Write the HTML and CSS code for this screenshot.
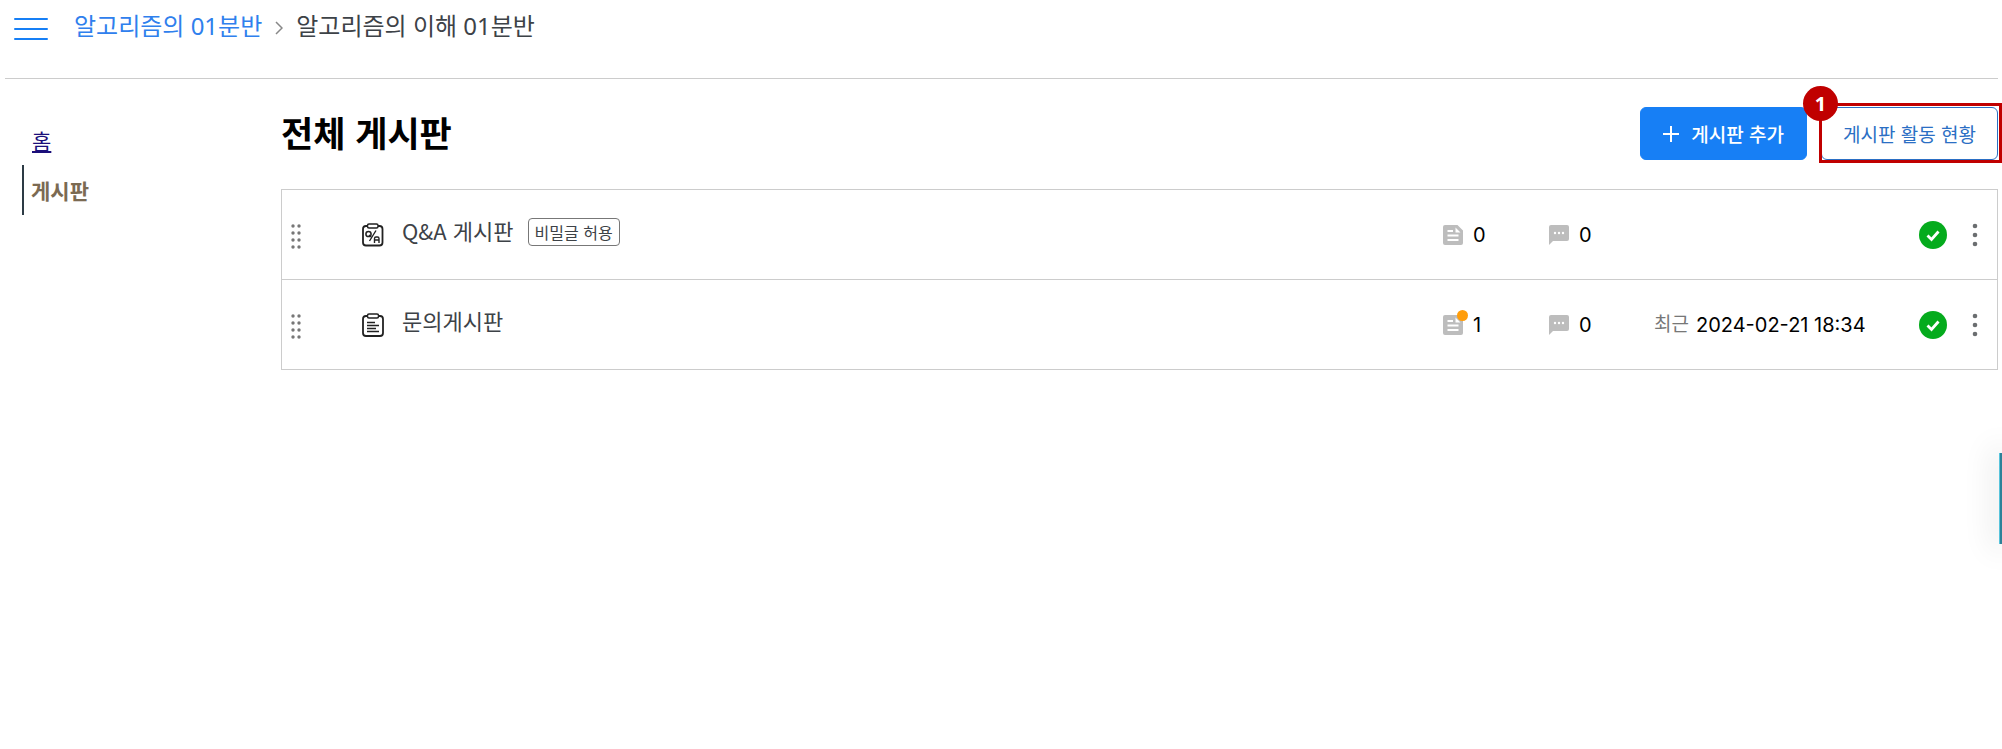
FILE: index.html
```html
<!DOCTYPE html>
<html lang="ko">

<head>
    <meta charset="UTF-8">
    <meta name="viewport" content="width=device-width, initial-scale=1.0">
    <title>전체 게시판</title>
    <link rel="stylesheet" href="styles.css">
</head>

<body>
    <!-- shared icons -->
    <svg class="icon-defs" width="0" height="0" aria-hidden="true">
        <symbol id="icon-drag" viewBox="0 0 10 26">
            <g fill="#777">
                <circle cx="2" cy="2" r="1.7" /><circle cx="8" cy="2" r="1.7" />
                <circle cx="2" cy="9" r="1.7" /><circle cx="8" cy="9" r="1.7" />
                <circle cx="2" cy="16" r="1.7" /><circle cx="8" cy="16" r="1.7" />
                <circle cx="2" cy="23" r="1.7" /><circle cx="8" cy="23" r="1.7" />
            </g>
        </symbol>
        <symbol id="icon-post" viewBox="0 0 20 20">
            <path fill="#bdbdbd" fill-rule="evenodd" d="M2 0h12.500L20 5.500V18a2 2 0 0 1-2 2H2a2 2 0 0 1-2-2V2a2 2 0 0 1 2-2zM4.500 5v2H10V5zM12.500 2.500v5h5zM4.500 9.500v2h11v-2zM4.500 14v2h11v-2z" />
        </symbol>
        <symbol id="icon-comment" viewBox="0 0 20 20">
            <path fill="#bdbdbd" d="M2 0h16a2 2 0 0 1 2 2v12a2 2 0 0 1-2 2H4l-4 4V2a2 2 0 0 1 2-2z" />
            <g fill="#fff">
                <circle cx="6" cy="8" r="1.200" /><circle cx="10" cy="8" r="1.200" /><circle cx="14" cy="8" r="1.200" />
            </g>
        </symbol>
        <symbol id="icon-check" viewBox="0 0 28 28">
            <circle cx="14" cy="14" r="14" fill="#05ab1d" />
            <path d="M8.500 14.500l4 4 7-8" fill="none" stroke="#fff" stroke-width="2.800" />
        </symbol>
        <symbol id="icon-more" viewBox="0 0 6 24">
            <g fill="#6b6e70">
                <circle cx="3" cy="3" r="2.300" /><circle cx="3" cy="12" r="2.300" /><circle cx="3" cy="21" r="2.300" />
            </g>
        </symbol>
    </svg>

    <header class="header">
        <button class="menu-btn" type="button" aria-label="메뉴">
            <span></span><span></span><span></span>
        </button>
        <nav class="breadcrumb">
            <a class="breadcrumb-link" href="#">알고리즘의 01분반</a>
            <svg class="breadcrumb-arrow" width="8" height="14" viewBox="0 0 8 14" aria-hidden="true">
                <path d="M1 1l6 6-6 6" fill="none" stroke="#888" stroke-width="1.500" />
            </svg>
            <span>알고리즘의 이해 01분반</span>
        </nav>
    </header>

    <div class="layout">
        <nav class="sidebar">
            <a class="side-link" href="#">홈</a>
            <a class="side-link side-active" href="#">게시판</a>
        </nav>

        <main class="main">
            <div class="title-row">
                <h1 class="title">전체 게시판</h1>
                <div class="actions">
                    <button class="btn btn-primary" type="button">
                        <svg width="16" height="16" viewBox="0 0 16 16" aria-hidden="true">
                            <path d="M8 0v16M0 8h16" stroke="#fff" stroke-width="2" />
                        </svg>
                        게시판 추가
                    </button>
                    <div class="marked">
                        <button class="btn btn-outline" type="button">게시판 활동 현황</button>
                        <div class="mark-frame"></div>
                        <span class="mark-number">1</span>
                    </div>
                </div>
            </div>

            <ul class="board-list">
                <li class="board">
                    <svg class="drag" width="10" height="26"><use href="#icon-drag" /></svg>
                    <svg class="board-icon" width="22" height="24" viewBox="0 0 22 24" fill="none" stroke="#222">
                        <path d="M5.500 3H4a3 3 0 0 0-3 3v13.500a3 3 0 0 0 3 3h13.500a3 3 0 0 0 3-3V6a3 3 0 0 0-3-3H16" stroke-width="1.800" />
                        <rect x="5.500" y="1" width="10.500" height="4" rx="1.500" stroke-width="1.500" />
                        <circle cx="6.500" cy="11" r="2.600" stroke-width="1.500" />
                        <path d="M7 12l2 2M14 7.500L7.500 18M12.500 20v-4.500a1.500 1.500 0 0 1 1.500-1.500h1.500a1.500 1.500 0 0 1 1.500 1.500V20M12.500 17H17" stroke-width="1.400" />
                    </svg>
                    <div class="board-name">
                        <a class="board-link" href="#">Q&amp;A 게시판</a>
                        <span class="tag">비밀글 허용</span>
                    </div>
                    <div class="count">
                        <svg width="20" height="20"><use href="#icon-post" /></svg>
                        <span>0</span>
                    </div>
                    <div class="count">
                        <svg width="20" height="20"><use href="#icon-comment" /></svg>
                        <span>0</span>
                    </div>
                    <div class="recent"></div>
                    <svg class="status" width="28" height="28"><use href="#icon-check" /></svg>
                    <button class="more-btn" type="button" aria-label="더보기">
                        <svg width="6" height="24"><use href="#icon-more" /></svg>
                    </button>
                </li>
                <li class="board">
                    <svg class="drag" width="10" height="26"><use href="#icon-drag" /></svg>
                    <svg class="board-icon" width="22" height="24" viewBox="0 0 22 24" fill="none" stroke="#222">
                        <path d="M5.500 3H4a3 3 0 0 0-3 3v14a3 3 0 0 0 3 3h14a3 3 0 0 0 3-3V6a3 3 0 0 0-3-3h-1.500" stroke-width="1.800" />
                        <rect x="5.500" y="1" width="11" height="4" rx="1.500" stroke-width="1.500" />
                        <path d="M5 9.500h8M5 12.500h12M5 15.500h9M5 18.500h12" stroke-width="1.500" />
                    </svg>
                    <div class="board-name">
                        <a class="board-link" href="#">문의게시판</a>
                    </div>
                    <div class="count count-new">
                        <svg width="20" height="20"><use href="#icon-post" /></svg>
                        <span>1</span>
                    </div>
                    <div class="count">
                        <svg width="20" height="20"><use href="#icon-comment" /></svg>
                        <span>0</span>
                    </div>
                    <div class="recent">
                        <span class="recent-label">최근</span>
                        <time datetime="2024-02-21T18:34">2024-02-21 18:34</time>
                    </div>
                    <svg class="status" width="28" height="28"><use href="#icon-check" /></svg>
                    <button class="more-btn" type="button" aria-label="더보기">
                        <svg width="6" height="24"><use href="#icon-more" /></svg>
                    </button>
                </li>
            </ul>
        </main>
    </div>

    <div class="side-tab"></div>
</body>

</html>
```
FILE: styles.css
```css
* {
    box-sizing: border-box;
}

:root {
    --color-blue: #177ff5;
    --color-mark: #c00000;
    --color-line: #ccc;
    --color-text: #3d4247;
}

body {
    margin: 0;
    padding: 0 4px 0 5px;
    background-color: #fff;
    color: var(--color-text);
    font-family: "Noto Sans CJK KR", "Noto Sans", sans-serif;
    overflow-x: hidden;
}

button {
    font-family: inherit;
    cursor: pointer;
}

svg {
    display: block;
    flex: none;
}

.icon-defs {
    position: absolute;
}

.header {
    display: flex;
    align-items: flex-start;
    gap: 26px;
    height: 79px;
    padding: 8px 9px 0;
    border-bottom: 1px solid var(--color-line);
}

.menu-btn {
    display: flex;
    flex-direction: column;
    gap: 8px;
    width: 34px;
    padding: 10px 0;
    border: 0;
    background: none;
}

.menu-btn span {
    width: 100%;
    height: 2px;
    border-radius: 1px;
    background-color: var(--color-blue);
}

.breadcrumb {
    display: flex;
    align-items: center;
    gap: 13px;
    font-family: "Noto Sans", "Noto Sans CJK KR", sans-serif;
    font-size: 24px;
    line-height: 36px;
}

.breadcrumb-link {
    color: #2f80ed;
    text-decoration: none;
}

.breadcrumb-arrow {
    margin-top: 4px;
}

.layout {
    display: grid;
    grid-template-columns: 276px 1fr;
}

.sidebar {
    padding: 36px 17px;
    font-size: 21px;
    line-height: 50px;
}

.side-link {
    display: block;
    padding-left: 10px;
    color: #1b0f7a;
}

.side-active {
    padding-left: 7px;
    border-left: 2px solid #2d3b45;
    color: #7b6a52;
    font-weight: bold;
    text-decoration: none;
}

.title-row {
    display: flex;
    justify-content: space-between;
    align-items: flex-start;
    padding: 28px 0 29px;
}

.title {
    margin: 0;
    color: #000;
    font-size: 35px;
    line-height: 50px;
}

.actions {
    display: flex;
    gap: 14px;
}

.btn {
    display: flex;
    align-items: center;
    gap: 12px;
    height: 53px;
    padding: 0 22px;
    border: 1px solid var(--color-blue);
    border-radius: 6px;
    font-size: 19px;
    line-height: 28px;
}

.btn-primary {
    background-color: var(--color-blue);
    color: #fff;
    font-weight: 500;
}

.btn-outline {
    padding: 0 21px;
    background-color: #fff;
    border-color: #2b6fc4;
    color: #2b6fc4;
}

.marked {
    position: relative;
}

.mark-frame {
    position: absolute;
    inset: -4px -4px -3px -2px;
    border: 3px solid var(--color-mark);
    pointer-events: none;
}

.mark-number {
    position: absolute;
    top: -21px;
    left: -18px;
    width: 35px;
    height: 35px;
    border-radius: 50%;
    background-color: var(--color-mark);
    color: #fff;
    font-family: "Noto Sans", sans-serif;
    font-size: 20px;
    font-weight: bold;
    line-height: 35px;
    text-align: center;
}

.board-list {
    margin: 0;
    padding: 0;
    border: 1px solid var(--color-line);
    list-style: none;
}

.board {
    box-sizing: content-box;
    display: grid;
    grid-template-columns: 80px 40px 1fr 106px 105px 265px 42px 36px;
    align-items: center;
    height: 89px;
}

.board + .board {
    border-top: 1px solid var(--color-line);
}

.drag {
    margin: 4px 0 0 9px;
}

.board-name {
    display: flex;
    align-items: center;
    gap: 14px;
    padding-bottom: 10px;
}

.board-link {
    color: inherit;
    font-size: 22px;
    line-height: 32px;
    text-decoration: none;
}

.tag {
    margin-top: 4px;
    padding: 0 6px;
    border: 1px solid #777;
    border-radius: 4px;
    font-size: 16px;
    line-height: 26px;
}

.count,
.recent {
    display: flex;
    align-items: center;
    color: #000;
    font-family: Inter, "Noto Sans CJK KR", sans-serif;
    font-size: 20px;
    line-height: 28px;
}

.count {
    position: relative;
    gap: 10px;
}

/* unread dot over the post icon */
.count-new::after {
    content: "";
    position: absolute;
    top: -1px;
    left: 14px;
    width: 11px;
    height: 11px;
    border-radius: 50%;
    background-color: #ff9d0a;
}

.recent {
    gap: 7px;
}

.recent-label {
    color: #777;
    font-size: 19px;
}

.more-btn {
    justify-self: start;
    padding: 4px 11px;
    border: 0;
    background: none;
}

.side-tab {
    position: fixed;
    top: 453px;
    right: 0;
    width: 3px;
    height: 91px;
    border-left: 1px solid #58c4dc;
    background-color: #2d8299;
    box-shadow: 0 0 30px 6px rgba(0, 0, 0, .1);
}
```
